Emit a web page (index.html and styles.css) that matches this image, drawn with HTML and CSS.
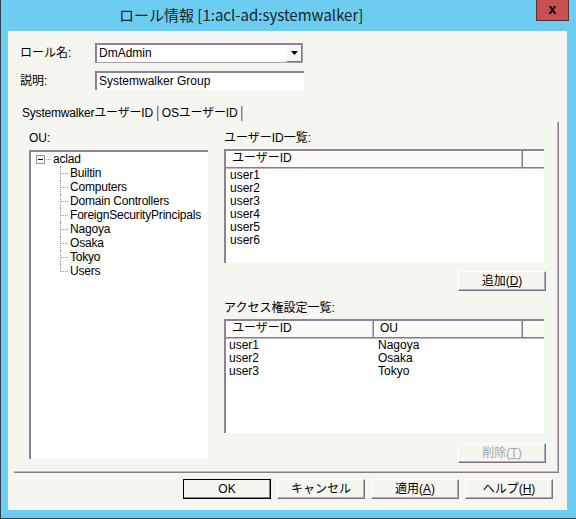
FILE: index.html
```html
<!DOCTYPE html>
<html lang="ja">
<head>
<meta charset="utf-8">
<title>ロール情報</title>
<link rel="stylesheet" href="styles.css">
</head>
<body>
<div class="window">
  <div class="titlebar">
    <div class="title">ロール情報 [1:acl-ad:systemwalker]</div>
    <div class="close">x</div>
  </div>
  <div class="client">
    <div class="form-row first">
      <span class="label">ロール名:</span>
      <div class="combo">
        <span class="combo-text">DmAdmin</span>
        <span class="combo-btn"><svg width="7" height="4" viewBox="0 0 7 4"><polygon points="0,0 7,0 3.5,4" fill="#000"/></svg></span>
      </div>
    </div>
    <div class="form-row">
      <span class="label">説明:</span>
      <div class="textfield">Systemwalker Group</div>
    </div>
    <div class="tabs">
      <span class="tab active">SystemwalkerユーザーID</span>
      <span class="tab-sep"></span>
      <span class="tab">OSユーザーID</span>
      <span class="tab-sep"></span>
    </div>
    <div class="panel">
      <div class="col-left">
        <div class="caption ou">OU:</div>
        <div class="tree">
          <div class="root-node"><span class="expander"></span><span class="hdots"></span><span class="node-text">aclad</span></div>
          <ul class="children">
            <li><span class="node-text">Builtin</span></li>
            <li><span class="node-text">Computers</span></li>
            <li><span class="node-text">Domain Controllers</span></li>
            <li><span class="node-text">ForeignSecurityPrincipals</span></li>
            <li><span class="node-text">Nagoya</span></li>
            <li><span class="node-text">Osaka</span></li>
            <li><span class="node-text hl">Tokyo</span></li>
            <li><span class="node-text">Users</span></li>
          </ul>
        </div>
      </div>
      <div class="col-right">
        <div class="caption">ユーザーID一覧:</div>
        <div class="listview">
          <div class="lv-header">
            <span class="hcol w297">ユーザーID</span>
            <span class="hcol fill"></span>
          </div>
          <div class="lv-body">
            <div class="lv-row"><span class="cell">user1</span></div>
            <div class="lv-row"><span class="cell">user2</span></div>
            <div class="lv-row"><span class="cell">user3</span></div>
            <div class="lv-row"><span class="cell">user4</span></div>
            <div class="lv-row"><span class="cell">user5</span></div>
            <div class="lv-row"><span class="cell">user6</span></div>
          </div>
        </div>
        <div class="btn-row"><button class="btn">追加(<u>D</u>)</button></div>
        <div class="caption second">アクセス権設定一覧:</div>
        <div class="listview">
          <div class="lv-header">
            <span class="hcol w148">ユーザーID</span>
            <span class="hcol w149">OU</span>
            <span class="hcol fill"></span>
          </div>
          <div class="lv-body">
            <div class="lv-row"><span class="cell w148">user1</span><span class="cell">Nagoya</span></div>
            <div class="lv-row"><span class="cell w148">user2</span><span class="cell">Osaka</span></div>
            <div class="lv-row"><span class="cell w148">user3</span><span class="cell">Tokyo</span></div>
          </div>
        </div>
        <div class="btn-row del"><button class="btn disabled">削除(<u>T</u>)</button></div>
      </div>
    </div>
    <div class="footer">
      <button class="btn default">OK</button>
      <button class="btn">キャンセル</button>
      <button class="btn">適用(<u>A</u>)</button>
      <button class="btn">ヘルプ(<u>H</u>)</button>
    </div>
  </div>
</div>
</body>
</html>
```

FILE: styles.css
```css
* { box-sizing: border-box; }
html, body { margin: 0; padding: 0; }
body {
  font-family: "Liberation Sans", "Noto Sans CJK JP", sans-serif;
  font-size: 12px;
  color: #000;
  background: #fff;
}
.window {
  width: 576px;
  height: 519px;
  background: #6ccdf0;
  border-left: 1px solid #2e3e46;
  border-bottom: 1px solid #2e3e46;
  display: flex;
  flex-direction: column;
}
.titlebar {
  height: 31px;
  display: flex;
  align-items: flex-start;
  flex-shrink: 0;
}
.title {
  font-family: "Noto Sans CJK JP", "Liberation Sans", sans-serif;
  font-size: 15px;
  line-height: 18px;
  padding-top: 6px;
  padding-left: 118px;
  color: #17252c;
}
.close {
  margin-left: auto;
  margin-right: 7px;
  width: 33px;
  height: 21px;
  background: #c75050;
  border: 1px solid #5a2e2e;
  border-top: none;
  display: flex;
  align-items: center;
  justify-content: center;
  font: bold 14px "Liberation Sans", sans-serif;
  line-height: 14px;
  padding-bottom: 2px;
}
.client {
  margin-left: 7px;
  width: 559px;
  height: 479px;
  background: #f6f6f1;
  display: flex;
  flex-direction: column;
  flex-shrink: 0;
}
.form-row {
  display: flex;
  align-items: center;
  padding-left: 12px;
}
.form-row.first { margin-top: 12px; }
.form-row + .form-row { margin-top: 8px; }
.label { width: 75px; line-height: 14px; }
.combo {
  width: 208px;
  height: 20px;
  background: #fff;
  border: 1px solid #a89cae;
  border-top: 2px solid #8f8296;
  border-left: 2px solid #8f8296;
  display: flex;
  align-items: stretch;
}
.combo-text {
  flex: 1;
  padding-left: 2px;
  line-height: 16px;
}
.combo-btn {
  width: 16px;
  background: #f6f6f1;
  border-left: 1px solid #fff;
  border-right: 1px solid #7e6e86;
  border-bottom: 1px solid #7e6e86;
  display: flex;
  align-items: center;
  justify-content: center;
}
.textfield {
  width: 209px;
  height: 19px;
  background: #fff;
  border-top: 2px solid #8f8296;
  border-left: 2px solid #8f8296;
  padding-left: 2px;
  line-height: 16px;
}
.tabs {
  margin-top: 14px;
  height: 18px;
  padding-left: 14px;
  display: flex;
  align-items: center;
}
.tab { line-height: 14px; white-space: nowrap; letter-spacing: -0.2px; }
.tab-sep {
  width: 2px;
  height: 15px;
  border-left: 1px solid #8a7a90;
  border-right: 1px solid #c6bdcb;
  margin-left: 4px;
  margin-right: 3px;
}
.panel {
  margin-left: 6px;
  width: 545px;
  height: 351px;
  border-right: 1px solid #8a7a90;
  border-bottom: 1px solid #8a7a90;
  box-shadow: inset -1px -1px 0 #c0b6c6;
  padding-top: 9px;
  padding-left: 15px;
  display: flex;
  align-items: flex-start;
}
.col-left { width: 179px; }
.col-right {
  width: 322px;
  margin-left: 16px;
  display: flex;
  flex-direction: column;
}
.caption { line-height: 14px; height: 14px; margin-bottom: 4px; }
.caption.ou { margin-bottom: 5px; }
.caption.second { margin-top: 10px; }
.tree {
  height: 309px;
  background: #fff;
  border-top: 2px solid #8f8296;
  border-left: 2px solid #8f8296;
  padding-left: 5px;
}
.root-node {
  height: 14px;
  display: flex;
  align-items: center;
}
.expander {
  width: 9px;
  height: 9px;
  border: 1px solid #949494;
  background: #fff;
  display: flex;
  align-items: center;
  justify-content: center;
  margin-top: 1px;
}
.expander::after {
  content: "";
  width: 5px;
  height: 1px;
  background: #000;
}
.hdots {
  width: 5px;
  border-top: 1px dotted #999;
  margin-left: 1px;
  margin-right: 1px;
  margin-top: 1px;
}
.node-text { line-height: 14px; white-space: nowrap; padding: 0 1px; letter-spacing: -0.2px; }
.node-text.hl { background: #f3f3ea; }
.children {
  list-style: none;
  margin: 0 0 0 24px;
  padding: 0;
}
.children li {
  position: relative;
  height: 14px;
  padding-left: 9px;
  display: flex;
  align-items: center;
}
.children li::before {
  content: "";
  position: absolute;
  left: 1px;
  top: 7px;
  width: 7px;
  border-top: 1px dotted #999;
}
.children li::after {
  content: "";
  position: absolute;
  left: 0;
  top: 0;
  bottom: 0;
  border-left: 1px dotted #999;
}
.children li:last-child::after { bottom: 6px; }
.listview {
  width: 320px;
  height: 114px;
  background: #fff;
  border-top: 2px solid #8f8296;
  border-left: 2px solid #8f8296;
  display: flex;
  flex-direction: column;
}
.lv-header {
  height: 17px;
  display: flex;
  background: #fafaf7;
  border-bottom: 1px solid #8a7a90;
  box-shadow: 0 1px 0 #c0b6c6;
  flex-shrink: 0;
}
.hcol {
  line-height: 15px;
  padding-left: 6px;
  border-right: 1px solid #8a7a90;
  box-shadow: inset -1px 0 0 #c0b6c6, 1px 0 0 #fff inset;
  white-space: nowrap;
}
.hcol.fill { flex: 1; border-right: none; box-shadow: none; }
.w297 { width: 297px; }
.w148 { width: 148px; }
.w149 { width: 149px; }
.lv-body { padding-top: 1px; }
.lv-row {
  display: flex;
  height: 13px;
  line-height: 13px;
}
.cell { padding-left: 4px; white-space: nowrap; }
.cell.w148 { padding-left: 3px; }
.btn-row {
  display: flex;
  justify-content: flex-end;
  margin-top: 8px;
}
.btn-row.del { margin-top: 10px; }
.btn {
  width: 88px;
  height: 20px;
  padding: 0;
  margin: 0;
  font-family: "Liberation Sans", "Noto Sans CJK JP", sans-serif;
  font-size: 12px;
  line-height: 16px;
  color: #000;
  background: #f6f6f1;
  border: none;
  border-top: 1px solid #fff;
  border-left: 1px solid #fff;
  border-right: 1px solid #7e6e86;
  border-bottom: 1px solid #7e6e86;
  box-shadow: inset -1px -1px 0 #b4aaba;
}
.btn u { text-decoration: underline; }
.btn.disabled { color: #a3a3a3; }
.btn.default {
  border: 1px solid #000;
  box-shadow: inset -1px -1px 0 #8a7a90;
}
.footer {
  display: flex;
  justify-content: flex-end;
  gap: 6px;
  margin-top: 6px;
  padding-right: 14px;
}
```
